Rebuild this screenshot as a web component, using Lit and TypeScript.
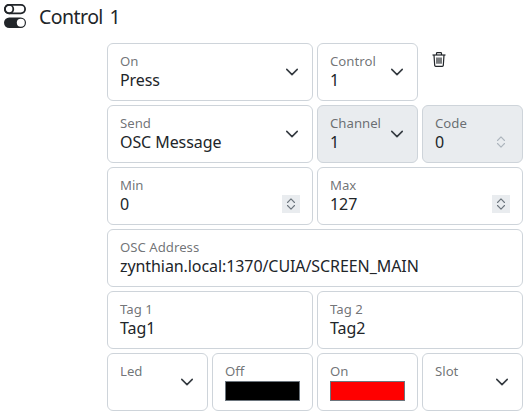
import { LitElement, html, css } from "lit";
import { customElement } from "lit/decorators.js";

const chevron = html`<svg class="chev" viewBox="0 0 16 16" width="14" height="14"><path fill="none" stroke="#343a40" stroke-linecap="round" stroke-linejoin="round" stroke-width="1.8" d="m2 5 6 6 6-6"/></svg>`;
const spin = (cls: string) => html`<span class="spin ${cls}"><svg viewBox="0 0 18 18" width="18" height="18"><path fill="none" stroke="currentColor" stroke-width="1.1" stroke-linecap="round" stroke-linejoin="round" d="M5.5 7.5 9 3.8l3.5 3.7M5.5 10.5 9 14.2l3.5-3.7"/></svg></span>`;

@customElement("app-root")
export class AppRoot extends LitElement {
  static styles = css`
    :host { display: block; width: 531px; height: 416px; overflow: hidden; background: #fff; font-family: "Noto Sans", sans-serif; color: #212529; box-sizing: border-box; }
    .head { display: flex; align-items: flex-start; gap: 13px; padding: 4px 0 0 4px; height: 31px; box-sizing: border-box; }
    .head svg { display: block; }
    .title { font-size: 19.5px; line-height: 26px; letter-spacing: -0.55px; word-spacing: 2.2px; }
    .grid { display: grid; grid-template-columns: repeat(4, 101px); grid-auto-rows: 58px; gap: 4px; margin: 12px 0 0 107px; }
    .f { position: relative; border: 1px solid #ced4da; border-radius: 6px; box-sizing: border-box; padding: 9px 12px 0; background: #fff; min-width: 0; }
    .s2 { grid-column: span 2; }
    .s4 { grid-column: span 4; }
    .dis { background: #e9ecef; }
    .l { font-size: 13.2px; line-height: 16px; color: rgba(33,37,41,.65); white-space: nowrap; }
    .v { font-size: 16px; line-height: 22px; letter-spacing: -0.08px; white-space: nowrap; }
    .chev { position: absolute; right: 13px; top: 21px; }
    .spin { position: absolute; right: 12px; top: 27px; width: 18px; height: 18px; color: #6c757d; background: #e9ecef; display: block; }
    .spin svg { display: block; }
    .spin.off { background: none; color: #adb5bd; }
    .trash { padding: 9px 0 0 10px; }
    .trash svg { display: block; }
    .swatch { height: 20px; width: 75px; box-sizing: border-box; border: 1px solid #6c757d; margin-top: 2px; }
    .black { background: #000; }
    .red { background: #f00; }
  `;

  render() {
    return html`
      <div class="head">
        <svg width="22" height="24" viewBox="0 0 22 24">
          <rect x=".9" y=".9" width="20.2" height="8.4" rx="4.2" fill="none" stroke="#212529" stroke-width="1.8"/>
          <circle cx="5.1" cy="5.1" r="4.2" fill="none" stroke="#212529" stroke-width="1.8"/>
          <rect x="0" y="13.5" width="22" height="10.5" rx="5.25" fill="#212529"/>
          <circle cx="16.8" cy="18.75" r="4" fill="#fff"/>
        </svg>
        <span class="title">Control 1</span>
      </div>
      <div class="grid">
        <div class="f s2"><div class="l">On</div><div class="v">Press</div>${chevron}</div>
        <div class="f"><div class="l">Control</div><div class="v">1</div>${chevron}</div>
        <div class="trash"><svg width="14" height="15" viewBox="0 0 14 15" fill="none" stroke="#212529" stroke-width="1.2"><path d="M.5 3h13"/><path d="M4.5 3V1.4a.8.8 0 0 1 .8-.8h3.4a.8.8 0 0 1 .8.8V3"/><path d="M2 3l.7 10.4a1 1 0 0 0 1 .9h6.6a1 1 0 0 0 1-.9L12 3"/><path d="M5 5.6v6.2M7 5.6v6.2M9 5.6v6.2"/></svg></div>

        <div class="f s2"><div class="l">Send</div><div class="v">OSC Message</div>${chevron}</div>
        <div class="f dis"><div class="l">Channel</div><div class="v">1</div>${chevron}</div>
        <div class="f dis"><div class="l">Code</div><div class="v">0</div>${spin("off")}</div>

        <div class="f s2"><div class="l">Min</div><div class="v">0</div>${spin("")}</div>
        <div class="f s2"><div class="l">Max</div><div class="v">127</div>${spin("")}</div>

        <div class="f s4"><div class="l">OSC Address</div><div class="v">zynthian.local:1370/CUIA/SCREEN_MAIN</div></div>

        <div class="f s2"><div class="l">Tag 1</div><div class="v">Tag1</div></div>
        <div class="f s2"><div class="l">Tag 2</div><div class="v">Tag2</div></div>

        <div class="f"><div class="l">Led</div>${chevron}</div>
        <div class="f"><div class="l">Off</div><div class="swatch black"></div></div>
        <div class="f"><div class="l">On</div><div class="swatch red"></div></div>
        <div class="f"><div class="l">Slot</div>${chevron}</div>
      </div>
    `;
  }
}
